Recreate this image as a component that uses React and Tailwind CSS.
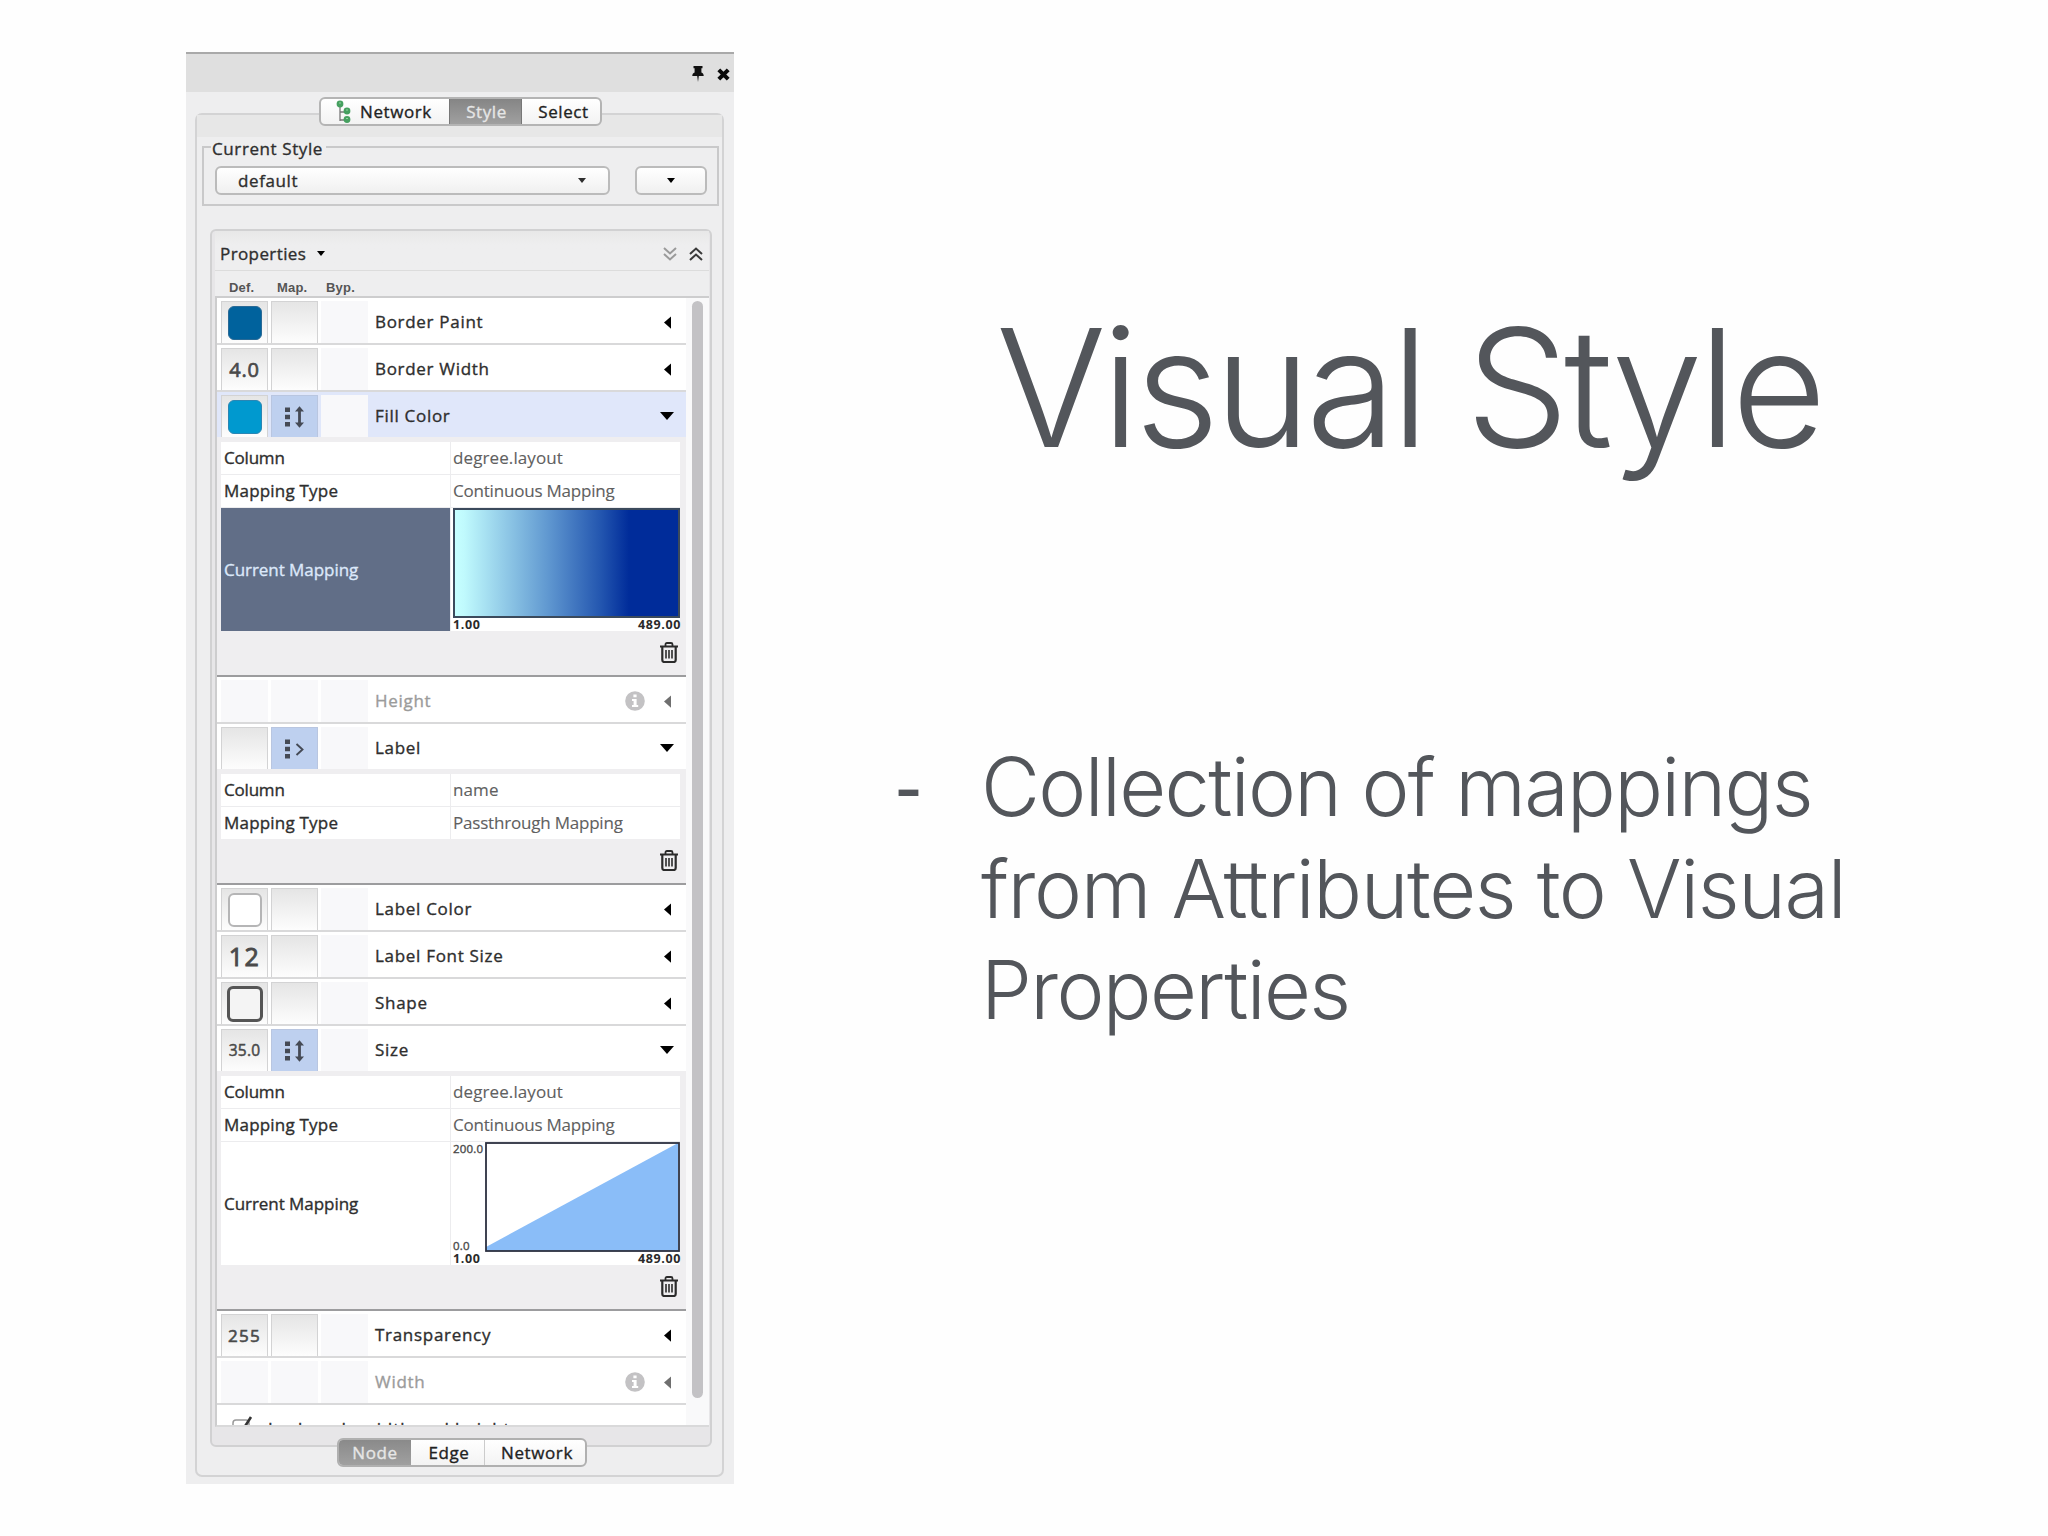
const continuous = 'continuous'
const passthrough = 'passthrough'

function ArrowDown({ className = 'w-[8px] h-[5px]' }) {
    return (
        <svg viewBox="0 0 14 8" preserveAspectRatio="none" className={className}>
            <path d="M0 0h14L7 8z" fill="currentColor" />
        </svg>
    )
}

function ArrowLeft() {
    return (
        <svg viewBox="0 0 8 14" className="w-[7px] h-[13px]">
            <path d="M8 0v14L0 7z" fill="currentColor" />
        </svg>
    )
}

function DoubleChevron({ className }) {
    return (
        <svg viewBox="0 0 14 14" className={`h-[14px] w-[14px] ${className}`} fill="none" stroke="currentColor" strokeWidth="2">
            <path d="M1 7l6-5.500L13 7M1 13l6-5.500L13 13" />
        </svg>
    )
}

function PinIcon() {
    return (
        <svg viewBox="0 0 12 16" className="w-[12px] h-[16px]">
            <path d="M1.500 0h9v2.300H9.400V6.500c1.500.6 2.300 1.900 2.300 3.500H6.800L6 16l-.8-6H.3c0-1.600.8-2.900 2.300-3.500V2.300H1.500z" fill="#111" />
        </svg>
    )
}

function CloseIcon() {
    return (
        <svg viewBox="0 0 13 13" className="w-[13px] h-[13px]">
            <path d="M1.800 1.800l9.400 9.400M11.200 1.800l-9.400 9.400" stroke="#0a0a0a" strokeWidth="4" />
        </svg>
    )
}

function TreeIcon() {
    return (
        <svg viewBox="0 0 16 24" className="w-[16px] h-[24px]">
            <path d="M4 6v15M4 12h4M4 20h4" stroke="#777" strokeWidth="1.300" fill="none" />
            <circle cx="4" cy="4" r="3.400" fill="#46a060" />
            <circle cx="11" cy="11" r="3.400" fill="#46a060" />
            <circle cx="11" cy="19.500" r="3.400" fill="#46a060" />
            <path d="M3 3h2M10 10h2M10 18.500h2" stroke="#8fd09f" strokeWidth="1" />
        </svg>
    )
}

function TrashIcon() {
    return (
        <svg viewBox="0 0 18 21" className="w-[18px] h-[21px]" fill="none" stroke="#2b2b2b">
            <path d="M0 4.500h18" strokeWidth="2" />
            <path d="M5.500 4V2.500Q5.500 1 7 1h4q1.500 0 1.500 1.500V4" strokeWidth="1.800" />
            <path d="M2.300 5v13q0 2 2 2h9.400q2 0 2-2V5" strokeWidth="2.200" />
            <path d="M6 8v8.500M9 8v8.500M12 8v8.500" strokeWidth="1.600" />
        </svg>
    )
}

function InfoIcon() {
    return (
        <svg viewBox="0 0 20 20" className="w-[20px] h-[20px]">
            <circle cx="10" cy="10" r="9.800" fill="#c3c2c4" />
            <path d="M8.400 3.500h3.200v2.800H8.400zM7 8h4.600v6h1.600v2H7v-2h1.600v-4H7z" fill="#fff" />
        </svg>
    )
}

function MappingIcon({ type }) {
    return (
        <svg viewBox="0 0 20 22" className="mr-[2px] w-[20px] h-[22px]" fill="none" stroke="#454a55">
            <path d="M3.500 1.500v4.500M3.500 8.800v4.500M3.500 16v4.500" strokeWidth="5" />
            {type === continuous ? (
                <>
                    <path d="M15.500 3v16" strokeWidth="2.800" />
                    <path d="M11 5.500l4.500-5.300 4.500 5.300zM11 16.500l4.500 5.300 4.500-5.300z" fill="#454a55" stroke="none" />
                </>
            ) : (
                <path d="M12.500 6l6 5.500-6 5.500" strokeWidth="1.900" />
            )}
        </svg>
    )
}

function Cell({ disabled, mapped, children }) {
    let look = 'border border-b-0 border-[#d3d3d4] bg-linear-to-b from-[#e5e5e5] to-[#fdfdfd]'
    if (disabled) look = 'bg-[#f8f8fa]'
    if (mapped) look = 'border border-b-0 border-[#b9c6e0] bg-[#bed0ef]'
    return <div className={`flex h-[42px] w-[47px] items-center justify-center ${look}`}>{children}</div>
}

function PropertyRow({ name, value, mapping, open, disabled, selected }) {
    return (
        <div className={`flex h-[47px] shrink-0 items-center border-b-2 pl-[4px] pt-[3px] ${selected ? 'bg-[#e0e7fa]' : 'bg-white'} ${open ? 'border-[#efeef0]' : 'border-[#d9d9da]'}`}>
            <div className="flex gap-[3px]">
                <Cell disabled={disabled}>{value}</Cell>
                <Cell disabled={disabled} mapped={mapping}>{mapping && <MappingIcon type={mapping} />}</Cell>
                <div className="h-[42px] w-[47px] bg-[#f8f8fa]"></div>
            </div>
            <span className={`ml-[7px] flex-1 text-[17px] tracking-[0.700px] ${disabled ? 'text-[#9b9b9b]' : 'text-[#2e2e2e]'}`}>{name}</span>
            {disabled && <InfoIcon />}
            <div className={`ml-[15px] flex w-[14px] justify-center mr-[12px] ${disabled ? 'text-[#6f6f6f]' : 'text-black'}`}>
                {open ? <ArrowDown className="h-[8px] w-[14px]" /> : <ArrowLeft />}
            </div>
        </div>
    )
}

function MappingDetail({ column, type, label, selected, chart }) {
    return (
        <div className="shrink-0 border-b-2 border-[#9c9c9e] bg-[#efeef0] pt-[3px] text-[17px] leading-[32px]">
            <div className="ml-[4px] mr-[6px] grid grid-cols-[229px_229px] gap-px bg-[#ececee]">
                <div className="h-[32px] bg-white pl-[3px] tracking-[-0.200px] text-[#2e2e2e]">Column</div>
                <div className="h-[32px] bg-white pl-[2px] tracking-[0.1px] text-[#606060] [-webkit-text-stroke:0.1px]">{column}</div>
                <div className="h-[32px] bg-white pl-[3px] tracking-[0.2px] text-[#2e2e2e]">Mapping Type</div>
                <div className="h-[32px] bg-white pl-[2px] tracking-[-0.200px] text-[#606060] [-webkit-text-stroke:0.1px]">{type}</div>
                {chart && (
                    <>
                        <div className={`flex h-[123px] items-center pl-[3px] tracking-[-0.05px] ${selected ? 'bg-[#616e87] text-[#dce8fa]' : 'bg-white text-[#2e2e2e]'}`}>{label}</div>
                        <div className="h-[123px] bg-white pl-[2px]">{chart}</div>
                    </>
                )}
            </div>
            <div className="flex h-[44px] items-center justify-end pb-[1px] pr-[8px]">
                <TrashIcon />
            </div>
        </div>
    )
}

function Range() {
    return (
        <div className="flex justify-between text-[12.500px] font-bold leading-[14px] tracking-[0.600px] text-[#2a2a2a] [-webkit-text-stroke:0px]">
            <span>1.00</span>
            <span className="mr-[-1px]">489.00</span>
        </div>
    )
}

function ColorChart() {
    return (
        <div>
            <div className="h-[110px] border-2 border-[#3b4a5c] bg-linear-[90deg,#c6ffff_0%,#c0fafd_4%,#5f97d0_42%,#2457b0_65%,#002c9a_78%,#002c9a_100%]"></div>
            <Range />
        </div>
    )
}

function SizeChart() {
    return (
        <div>
            <div className="flex h-[110px]">
                <div className="flex w-[32px] flex-col justify-between text-[11.500px] leading-[13px] tracking-[0.2px] text-[#4a4a4a]">
                    <span>200.0</span>
                    <span>0.0</span>
                </div>
                <svg viewBox="0 0 195 110" className="h-[110px] w-[195px]">
                    <rect x="0" y="0" width="195" height="110" fill="#fff" />
                    <path d="M1 105L193 1V109H1z" fill="#8abdf8" />
                    <rect x="1" y="1" width="193" height="108" fill="none" stroke="#2c3040" strokeWidth="1.800" />
                </svg>
            </div>
            <Range />
        </div>
    )
}

const swatch = 'h-[34px] w-[34px] rounded-[6px] border'

export default function App() {
    return (
        <div className="flex h-[1536px] w-[2048px] overflow-hidden bg-[#fefefe] font-['Open_Sans','Noto_Sans',sans-serif]">
            <div className="ml-[186px] mt-[52px] flex h-[1432px] w-[548px] shrink-0 flex-col border-t-2 border-[#a9a9a9] bg-[#eeeeef] [-webkit-text-stroke:0.35px]">
                <div className="flex h-[38px] shrink-0 items-center justify-end gap-[13px] bg-[#dfdfdf] pr-[4px] pt-[2px]">
                    <PinIcon />
                    <CloseIcon />
                </div>

                {/* top tabs sit over the border of the group below */}
                <div className="z-10 ml-[133px] mt-[5px] flex h-[29px] w-[283px] shrink-0 overflow-hidden rounded-[6px] border-2 border-[#b4b4b4] bg-linear-to-b from-white to-[#f3f3f3] text-[17px] leading-[25px] tracking-[0.6px] text-[#222]">
                    <div className="flex w-[128px] items-center gap-[8px] pl-[15px]">
                        <TreeIcon />
                        <span>Network</span>
                    </div>
                    <div className="w-[73px] border-x border-[#777] bg-linear-to-b from-[#858585] to-[#a0a0a0] pl-[2px] text-center text-[#e6e6e6]">Style</div>
                    <div className="flex-1 pl-[5px] text-center">Select</div>
                </div>

                <div className="mb-[7px] ml-[9px] mr-[10px] mt-[-13px] flex min-h-0 flex-1 flex-col rounded-[7px] border-2 border-[#d3d3d4]">
                    <div className="h-[22px] shrink-0 bg-[#e7e7e7]"></div>
                    <div className="ml-[5px] mr-[3px] mt-[9px] flex h-[60px] shrink-0 flex-col border-2 border-[#c9c9ca] px-[11px]">
                        <span className="ml-[-4px] mt-[-9px] self-start bg-[#eeeeef] pl-[1px] pr-[3px] text-[17px] leading-[20px] tracking-[0.600px] text-[#2e2e2e]">Current Style</span>
                        <div className="mt-[7px] flex justify-between">
                            <div className="flex h-[29px] w-[395px] items-center justify-between rounded-[6px] border-2 border-[#bbb] bg-linear-to-b from-white to-[#f0f0f0] pl-[21px] pr-[22px] text-[17px] tracking-[0.6px] text-[#2e2e2e]">
                                default
                                <ArrowDown />
                            </div>
                            <div className="mr-[-1px] flex h-[29px] w-[72px] items-center justify-center rounded-[6px] border-2 border-[#bbb] bg-linear-to-b from-white to-[#f0f0f0]">
                                <ArrowDown />
                            </div>
                        </div>
                    </div>

                    <div className="mb-[28px] ml-[13px] mr-[10px] mt-[23px] flex min-h-0 flex-1 flex-col rounded-[6px] border-2 border-[#d1d1d2] bg-[#e7e6e8] pl-[3px] pr-[1px]">
                        <div className="flex h-[40px] shrink-0 items-center border-b border-[#dcdcdc] bg-[#eeeeef] bg-linear-to-b from-[#e8e8e8] to-[#eeeeef] to-35% pl-[5px] pt-[6px]">
                            <span className="text-[17px] tracking-[0.4px] text-[#2e2e2e]">Properties</span>
                            <ArrowDown className="ml-[11px] h-[5px] w-[8px]" />
                            <div className="ml-auto flex gap-[12px] pr-[6px]">
                                <DoubleChevron className="rotate-180 text-[#9a9a9a]" />
                                <DoubleChevron className="text-[#3a3a3a]" />
                            </div>
                        </div>
                        <div className="flex h-[25px] shrink-0 items-center bg-[#eeeeef] pl-[14px] pt-[8px] font-['Liberation_Sans',Arial,sans-serif] text-[13px] font-bold tracking-[0.2px] text-[#555] [-webkit-text-stroke:0px]">
                            <span className="w-[48px]">Def.</span>
                            <span className="w-[49px]">Map.</span>
                            <span>Byp.</span>
                        </div>
                        <div className="mb-[18px] flex min-h-0 flex-1 overflow-hidden border-2 border-r-0 border-[#cdcdce] border-b-[#d9d9da] bg-[#f9f9fa]">
                            <div className="flex w-[469px] flex-col">
                                <PropertyRow name="Border Paint" value={<div className={`${swatch} border-[#2a6a96] bg-[#00629d]`}></div>} />
                                <PropertyRow name="Border Width" value={<span className="text-[20px] tracking-[0.800px] text-[#4a4a4a] [-webkit-text-stroke:0.7px]">4.0</span>} />
                                <PropertyRow name="Fill Color" mapping={continuous} open selected value={<div className={`${swatch} border-[#2a86b4] bg-[#0099cf]`}></div>} />
                                <MappingDetail column="degree.layout" type="Continuous Mapping" label="Current Mapping" selected chart={<ColorChart />} />
                                <PropertyRow name="Height" disabled />
                                <PropertyRow name="Label" mapping={passthrough} open />
                                <MappingDetail column="name" type="Passthrough Mapping" />
                                <PropertyRow name="Label Color" value={<div className={`${swatch} border-2 border-[#b5b5b6] bg-white`}></div>} />
                                <PropertyRow name="Label Font Size" value={<span className="text-[25px] tracking-[1.500px] text-[#4a4a4a] [-webkit-text-stroke:0.9px]">12</span>} />
                                <PropertyRow name="Shape" value={<div className="h-[36px] w-[36px] rounded-[6px] border-[3px] border-[#555] bg-[#f4f4f4]"></div>} />
                                <PropertyRow name="Size" mapping={continuous} open value={<span className="text-[15.500px] tracking-[0.2px] text-[#4a4a4a] [-webkit-text-stroke:0.5px]">35.0</span>} />
                                <MappingDetail column="degree.layout" type="Continuous Mapping" label="Current Mapping" chart={<SizeChart />} />
                                <PropertyRow name="Transparency" value={<span className="text-[17px] tracking-[1.300px] text-[#4a4a4a] [-webkit-text-stroke:0.6px]">255</span>} />
                                <PropertyRow name="Width" disabled />
                                <div className="flex h-[47px] shrink-0 items-start bg-white pl-[15px] pt-[14px]">
                                    <svg viewBox="0 0 22 20" className="mt-[-3px] h-[20px] w-[22px]" fill="none">
                                        <rect x="1" y="4" width="16" height="15" rx="3" stroke="#999" strokeWidth="1.500" />
                                        <path d="M6 10l4 5L19 1" stroke="#333" strokeWidth="2.600" />
                                    </svg>
                                    <span className="ml-[14px] text-[17px] leading-[20px] tracking-[0.900px] text-[#2e2e2e]">Lock node width and height</span>
                                </div>
                            </div>
                            <div className="ml-[6px] mt-[3px] h-[1097px] w-[11px] rounded-full bg-[#c3c2c5]"></div>
                        </div>
                    </div>
                </div>

                {/* bottom tabs overlap the properties box */}
                <div className="z-10 mb-[17px] ml-[151px] mt-[-46px] flex h-[29px] w-[250px] shrink-0 overflow-hidden rounded-[6px] border-2 border-[#b0b0b0] bg-linear-to-b from-white to-[#f3f3f3] text-[17px] leading-[25px] tracking-[0.6px] text-[#222]">
                    <div className="w-[72px] bg-linear-to-b from-[#8a8a8a] to-[#a0a0a0] text-center text-[#e6e6e6]">Node</div>
                    <div className="w-[74px] border-r border-[#ccc] pl-[3px] text-center">Edge</div>
                    <div className="flex-1 pl-[4px] text-center">Network</div>
                </div>
            </div>

            <div className="ml-[157px] flex flex-col font-['Inter','Liberation_Sans',sans-serif] font-light text-[#53565b]">
                <h1 className="ml-[105px] mt-[288px] whitespace-nowrap text-[164px] leading-[200px] tracking-[-5px]">Visual Style</h1>
                <div className="mt-[249px] flex whitespace-nowrap text-[81px] leading-[101.500px]">
                    <span className="w-[90px] pl-[4px] font-['Liberation_Sans',Arial,sans-serif]">-</span>
                    <p className="flex flex-col">
                        <span className="tracking-[-1.650px]">Collection of mappings</span>
                        <span className="tracking-[-1.350px]">from Attributes to Visual</span>
                        <span className="tracking-[-1.600px]">Properties</span>
                    </p>
                </div>
            </div>
        </div>
    )
}
